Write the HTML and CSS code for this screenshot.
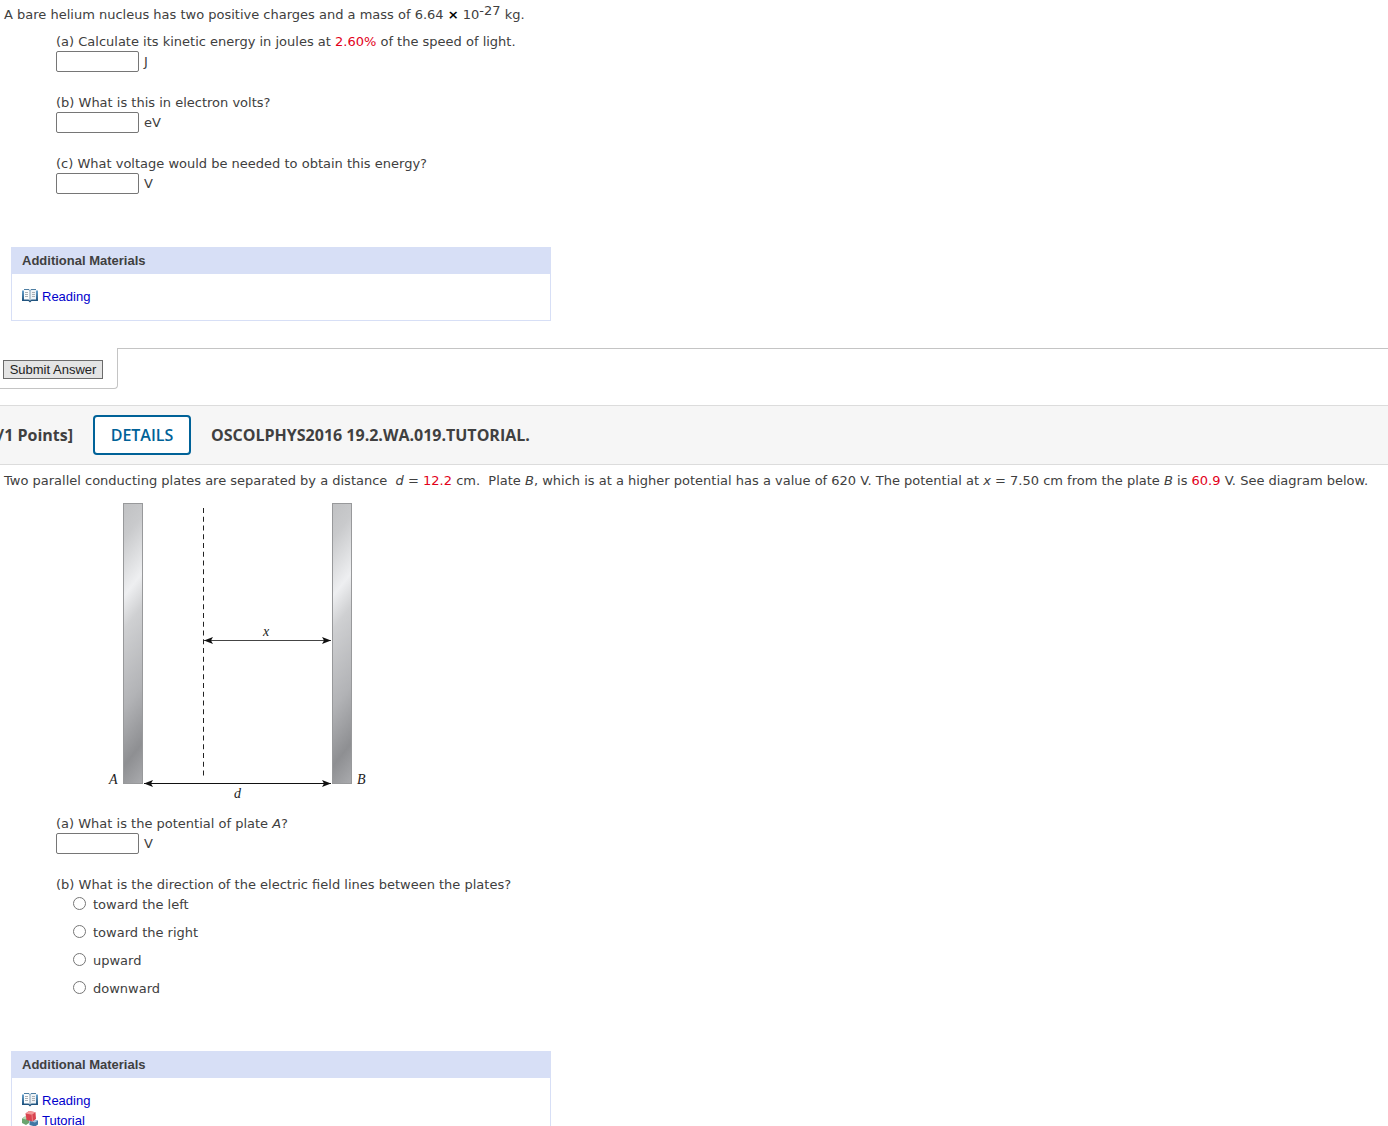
FILE: index.html
```html
<!DOCTYPE html>
<html lang="en">
<head>
  <meta charset="UTF-8">
  <title>Homework</title>
  <link rel="stylesheet" href="styles.css">
</head>
<body>
  <!-- shared icons -->
  <svg class="sprite" aria-hidden="true">
    <defs>
      <linearGradient id="cover" x1="0" y1="0" x2="0" y2="1">
        <stop offset="0" stop-color="#6ba6d2"/>
        <stop offset="1" stop-color="#12446f"/>
      </linearGradient>
      <symbol id="icon-book" viewBox="0 0 16 14">
        <path d="M0 1.500h2V1h4.500L8 2l1.500-1H14v.5h2V12H9.500L8 13.500 6.500 12H0z" fill="url(#cover)"/>
        <path d="M2 1h4.500L8 2.200v9.300l-1.500-1H2z" fill="#fbfcfd"/>
        <path d="M14 1H9.500L8 2.200v9.300l1.500-1H14z" fill="#eef3f6"/>
        <path d="M2 .5h5l1 1 1-1h5" fill="none" stroke="#4f7fa3"/>
        <path d="M8 2v9.500" stroke="#7f9db2"/>
        <path d="M3 3.500h3M3 5.500h3M3 7.500h3M10 3.500h3M10 5.500h3M10 7.500h3" stroke="#a9b0b5"/>
      </symbol>
      <symbol id="icon-cubes" viewBox="0 0 16 16">
        <path d="M0 7.500l3-2 4 1v5.500l-3 2-4-2z" fill="#6ba56f"/>
        <path d="M0 7.500l3-2 4 1-3 2z" fill="#b8d9b6"/>
        <path d="M7.500 10l3-1.500 5.500 1v4l-3 2-5.500-1.500z" fill="#3f77a4"/>
        <path d="M7.500 10l3-1.500 5.500 1-3 2z" fill="#a4c4dc"/>
        <path d="M3.500 2.500L7 0l6.500 1.200.5 6.800-3.500 2.500-6-1.500z" fill="#d94550"/>
        <path d="M3.500 2.500L7 0l6.500 1.200-3.500 2.600z" fill="#f39a9b"/>
        <path d="M10 3.800l.5 6.200" stroke="#ef8085"/>
      </symbol>
    </defs>
  </svg>

  <main>
    <section class="question">
      <p class="prompt">A bare helium nucleus has two positive charges and a mass of 6.64 <b class="times">×</b> 10<sup>-27</sup> kg.</p>
      <div class="parts">
        <div class="part">
          <label for="q1a">(a) Calculate its kinetic energy in joules at <span class="value">2.60%</span> of the speed of light.</label>
          <div class="answer"><input type="text" id="q1a"> <span>J</span></div>
        </div>
        <div class="part">
          <label for="q1b">(b) What is this in electron volts?</label>
          <div class="answer"><input type="text" id="q1b"> <span>eV</span></div>
        </div>
        <div class="part">
          <label for="q1c">(c) What voltage would be needed to obtain this energy?</label>
          <div class="answer"><input type="text" id="q1c"> <span>V</span></div>
        </div>
      </div>
      <div class="materials">
        <h3>Additional Materials</h3>
        <ul>
          <li><svg class="book"><use href="#icon-book"/></svg><a href="#">Reading</a></li>
        </ul>
      </div>
    </section>

    <div class="submit-row">
      <div class="submit-tab"><button type="submit">Submit Answer</button></div>
      <div class="submit-line"></div>
    </div>

    <header class="question-bar">
      <span class="points">/1 Points]</span>
      <button type="button" class="details">DETAILS</button>
      <h2>OSCOLPHYS2016 19.2.WA.019.TUTORIAL.</h2>
    </header>

    <section class="question">
      <p class="prompt">Two parallel conducting plates are separated by a distance &nbsp;<i>d</i> = <span class="value">12.2</span> cm. &nbsp;Plate <i>B</i>, which is at a higher potential has a value of 620 V. The potential at <i>x</i> = 7.50 cm from the plate <i>B</i> is <span class="value">60.9</span> V. See diagram below.</p>
      <svg class="diagram" width="272" height="302" viewBox="0 0 272 302" role="img" aria-label="Two parallel plates A and B">
        <defs>
          <linearGradient id="plate" gradientUnits="userSpaceOnUse" x1="0" y1="0" x2="148" y2="118">
            <stop offset="0" stop-color="#c0c1c3"/>
            <stop offset="0.12" stop-color="#c9cacc"/>
            <stop offset="0.31" stop-color="#eeeff1"/>
            <stop offset="0.42" stop-color="#cfd0d2"/>
            <stop offset="0.68" stop-color="#b2b3b6"/>
            <stop offset="0.87" stop-color="#8e8f92"/>
            <stop offset="1" stop-color="#a9aaad"/>
          </linearGradient>
          <marker id="arrow" viewBox="0 0 9 8" refX="9" refY="4" markerWidth="9" markerHeight="8" orient="auto-start-reverse">
            <path d="M9 4L0 0.500 2 4 0 7.500z" fill="#111"/>
          </marker>
        </defs>
        <g stroke="#98999b" fill="url(#plate)">
          <rect x="0.500" y="0.500" width="19" height="280" transform="translate(18 3)"/>
          <rect x="0.500" y="0.500" width="19" height="280" transform="translate(227 3)"/>
        </g>
        <path d="M98.500 8v268" stroke="#222" stroke-dasharray="5 3.750"/>
        <path d="M99 140.500h127" stroke="#444" marker-start="url(#arrow)" marker-end="url(#arrow)"/>
        <path d="M39 283.500h187" stroke="#111" marker-start="url(#arrow)" marker-end="url(#arrow)"/>
        <text x="158" y="136">x</text>
        <text x="4" y="284">A</text>
        <text x="252" y="284">B</text>
        <text x="129" y="298">d</text>
      </svg>
      <div class="parts">
        <div class="part">
          <label for="q2a">(a) What is the potential of plate <i>A</i>?</label>
          <div class="answer"><input type="text" id="q2a"> <span>V</span></div>
        </div>
        <fieldset class="part">
          <legend>(b) What is the direction of the electric field lines between the plates?</legend>
          <div class="choices">
            <label><input type="radio" name="direction"> toward the left</label>
            <label><input type="radio" name="direction"> toward the right</label>
            <label><input type="radio" name="direction"> upward</label>
            <label><input type="radio" name="direction"> downward</label>
          </div>
        </fieldset>
      </div>
      <div class="materials">
        <h3>Additional Materials</h3>
        <ul>
          <li><svg class="book"><use href="#icon-book"/></svg><a href="#">Reading</a></li>
          <li><svg class="cubes"><use href="#icon-cubes"/></svg><a href="#">Tutorial</a></li>
        </ul>
      </div>
    </section>
  </main>
</body>
</html>
```
FILE: styles.css
```css
* {
  box-sizing: border-box;
}

html {
  scrollbar-width: none;
}

body {
  margin: 0;
  background: #fff;
  color: #404040;
  font-family: Verdana, "DejaVu Sans", sans-serif;
  font-size: 13px;
  line-height: 20px;
  overflow-x: hidden;
}

.sprite {
  display: block;
  width: 0;
  height: 0;
}

.prompt {
  margin: 0;
  padding: 5px 4px 0;
}

.question-bar + .question .prompt {
  padding-top: 6px;
}

.prompt sup {
  font-size: 13px;
  line-height: 0;
  vertical-align: 4px;
}

.times {
  color: #000;
}

.value {
  color: #e2001a;
}

.parts {
  padding: 6px 0 0 56px;
}

.part {
  margin: 0 0 20px;
  padding: 0;
  border: 0;
}

.part > label,
.part legend {
  display: block;
  height: 20px;
  padding: 0;
  line-height: 22px;
}

.answer {
  display: flex;
  gap: 5px;
  height: 21px;
  line-height: 22px;
}

.answer input {
  width: 83px;
  height: 21px;
  padding: 1px 2px;
  border: 1px solid #767676;
  border-radius: 2px;
  background: #fff;
  font: inherit;
}

.choices {
  display: flex;
  flex-direction: column;
  gap: 8px;
  padding-left: 17px;
}

.choices label {
  display: flex;
  gap: 7px;
  height: 20px;
  line-height: 22px;
}

.choices input {
  width: 13px;
  height: 13px;
  margin: 3px 0 0;
}

.materials {
  width: 540px;
  margin: 53px 0 27px 11px;
  border: 1px solid #d7dff6;
  border-top: 0;
  font-family: Arial, "Liberation Sans", sans-serif;
}

.materials h3 {
  margin: 0 -1px;
  padding: 4px 11px 3px;
  background: #d7dff6;
  font-size: 13px;
}

.materials ul {
  margin: 0;
  padding: 13px 10px;
  list-style: none;
}

.materials li {
  display: flex;
  gap: 4px;
}

.materials a {
  color: #0000cc;
  text-decoration: none;
}

.book {
  width: 16px;
  height: 14px;
  margin-top: 2px;
}

.cubes {
  width: 16px;
  height: 16px;
}

.submit-row {
  display: flex;
}

.submit-tab {
  width: 118px;
  padding: 12px 3px 9px;
  border: solid #c4c4c4;
  border-width: 0 1px 1px 0;
  border-radius: 0 0 4px 0;
}

.submit-tab button {
  display: block;
  width: 100px;
  height: 19px;
  padding: 0;
  border: 1px solid #6b6b6b;
  background: #e4e4e4;
  color: #222;
  font: 13px/17px Arial, "Liberation Sans", sans-serif;
}

.submit-line {
  flex: 1;
  border-top: 1px solid #c4c4c4;
}

.question-bar {
  display: flex;
  align-items: center;
  height: 60px;
  margin-top: 16px;
  border: solid #dcdcdc;
  border-width: 1px 0;
  background: #f6f6f6;
  font-family: "Open Sans", sans-serif;
  font-size: 16px;
}

.points {
  display: flex;
  justify-content: flex-end;
  width: 73px;
  overflow: hidden;
  font-weight: 700;
  white-space: nowrap;
}

.details {
  width: 98px;
  height: 40px;
  margin: 0 20px;
  padding: 0;
  border: 2px solid #006298;
  border-radius: 4px;
  background: #fff;
  color: #006298;
  font: 600 16px "Open Sans", sans-serif;
}

.question-bar h2 {
  margin: 0;
  font-size: 16px;
}

.diagram {
  display: block;
  margin: 9px 0 5px 105px;
}

.diagram text {
  fill: #222;
  font: italic 14px "Liberation Serif", serif;
}
```
